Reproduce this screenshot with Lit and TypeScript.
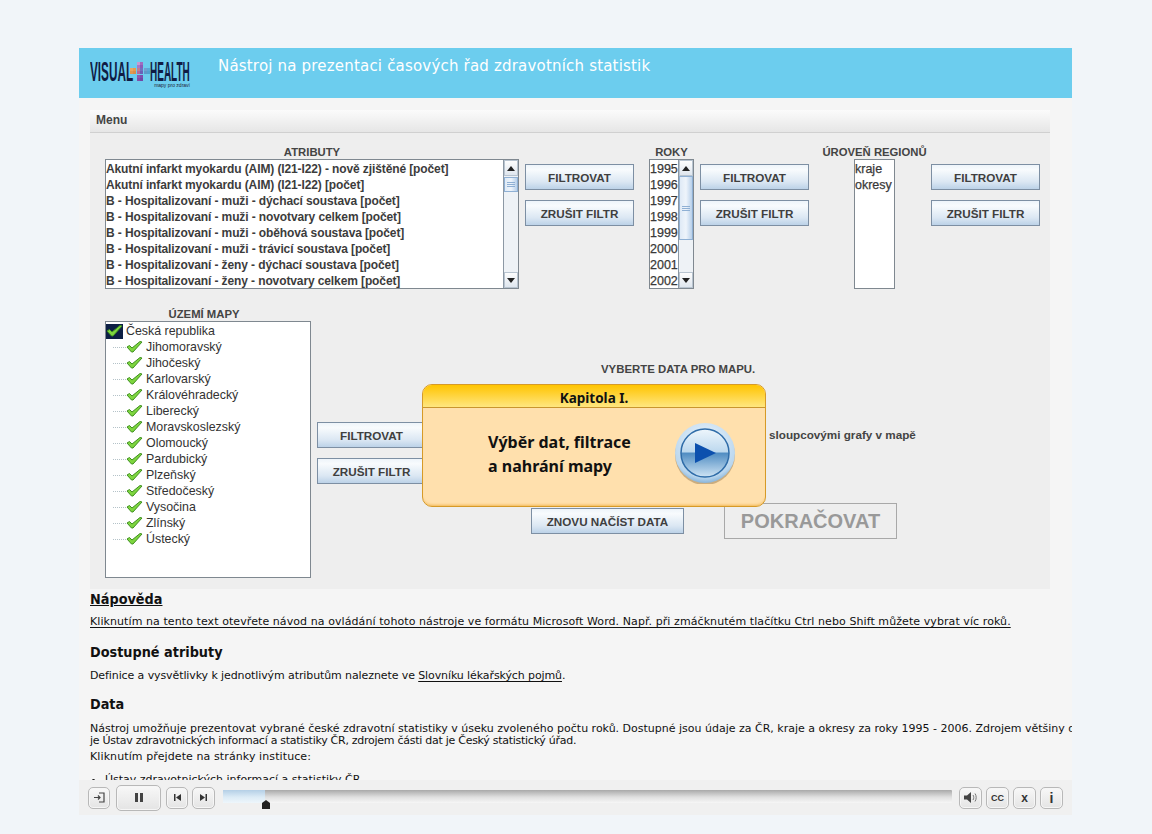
import { LitElement, html, css, svg } from "lit";
import { customElement } from "lit/decorators.js";

const ATTRS = [
  "Akutní infarkt myokardu (AIM) (I21-I22) - nově zjištěné [počet]",
  "Akutní infarkt myokardu (AIM) (I21-I22) [počet]",
  "B - Hospitalizovaní - muži - dýchací soustava [počet]",
  "B - Hospitalizovaní - muži - novotvary celkem [počet]",
  "B - Hospitalizovaní - muži - oběhová soustava [počet]",
  "B - Hospitalizovaní - muži - trávicí soustava [počet]",
  "B - Hospitalizovaní - ženy - dýchací soustava [počet]",
  "B - Hospitalizovaní - ženy - novotvary celkem [počet]",
];
const YEARS = ["1995", "1996", "1997", "1998", "1999", "2000", "2001", "2002"];
const REGIONS = ["Jihomoravský", "Jihočeský", "Karlovarský", "Královéhradecký", "Liberecký", "Moravskoslezský", "Olomoucký", "Pardubický", "Plzeňský", "Středočeský", "Vysočina", "Zlínský", "Ústecký"];

const check = svg`<path d="M1 7 L3.5 5.5 L6 8 L14 1.5 L16 2 L7 12 L5.5 12 Z" fill="#7ed63f" stroke="#3f8f20" stroke-width="1"/>`;

const plusCells: [number, number, string][] = [
  [7,0,"#c79ad0"],[10,0,"#a06cc0"],[7,3,"#a878c8"],[10,3,"#8a5cb8"],
  [0,6,"#e8a860"],[3,6,"#e89a50"],[7,6,"#c08090"],[10,6,"#7070c0"],[14,6,"#70a0d0"],[17,6,"#58a8d8"],
  [0,9,"#e09850"],[3,9,"#d89048"],[7,9,"#b06aa0"],[10,9,"#6a60b8"],[14,9,"#6098c8"],[17,9,"#50a0d0"],
  [7,13,"#9058b0"],[10,13,"#7a50b0"],[7,16,"#8050a8"],[10,16,"#7048a8"],
];

@customElement("app-root")
export class AppRoot extends LitElement {
  static styles = css`
    :host { display: block; width: 1152px; height: 834px; background: #f1f5f9; overflow: hidden; font-family: "Liberation Sans", Arial, sans-serif; }
    .wrap { width: 993px; margin-left: 79px; padding-top: 48px; }
    .top { height: 50px; background: #6ccdee; display: flex; align-items: flex-start; }
    .logo { width: 100px; height: 36px; margin: 9px 0 0 11px; display: flex; flex-direction: column; flex: none; }
    .logo-row { display: flex; align-items: center; height: 20px; margin-top: 5px; color: #101c44; font-weight: 700; font-size: 28px; line-height: 20px; }
    .lt { display: block; width: 40px; white-space: nowrap; transform-origin: 0 50%; flex: none; }
    .lt.v { transform: scaleX(.42); }
    .lt.h { transform: scaleX(.357); }
    .logo svg { flex: none; width: 20px; height: 20px; }
    .tag { font-size: 5px; color: #223; text-align: right; width: 100px; line-height: 6px; }
    .title { margin: 8px 0 0 28px; color: #fff; font-family: "DejaVu Sans", sans-serif; font-size: 15px; line-height: 20px; letter-spacing: .19px; }

    .scroll { height: 682px; overflow: hidden; background: #f5f5f5; padding: 12px 11px 0; box-sizing: border-box; white-space: nowrap; }
    .applet { position: relative; width: 960px; height: 479px; background: #eeeeee; color: #333; }
    .menu { height: 23px; box-sizing: border-box; background: linear-gradient(#fbfbfb, #e6e6e6); border-bottom: 1px solid #d0d0d0; font-size: 12px; font-weight: 700; line-height: 21px; padding-left: 6px; color: #444; }
    .row1 { display: flex; padding: 12px 0 0 15px; height: 167px; box-sizing: border-box; }
    .col { display: flex; flex-direction: column; align-items: center; }
    .lab { font-size: 11.3px; font-weight: 700; line-height: 15px; height: 14px; color: #444; white-space: nowrap; }
    .listbox { display: flex; height: 130px; box-sizing: border-box; border: 1px solid #7f8890; background: #fff; }
    .items { flex: 1; overflow: hidden; font-weight: 700; font-size: 12px; letter-spacing: -.11px; line-height: 16px; color: #3c3c3c; padding-top: 1px; }
    .items div { height: 16px; white-space: nowrap; }
    .yearitems { font-size: 12.5px; letter-spacing: 0; font-weight: 400; -webkit-text-stroke: .25px #333; overflow: visible; min-width: 0; }
    .sb { width: 14px; flex: none; border-left: 1px solid #8c98a4; background: #eef2f6; display: flex; flex-direction: column; }
    .arrow { height: 16px; flex: none; background: linear-gradient(#fdfdfd, #dfe6ee); border: 1px solid #b8c4d0; box-sizing: border-box; display: flex; align-items: center; justify-content: center; }
    .tri-up { width: 0; height: 0; border: 4px solid transparent; border-top: 0; border-bottom: 5px solid #222; }
    .tri-dn { width: 0; height: 0; border: 4px solid transparent; border-bottom: 0; border-top: 5px solid #222; }
    .track { flex: 1; }
    .thumb { box-sizing: border-box; background: linear-gradient(90deg, #dfeaf6, #eef4fb 50%, #b8d0ea); border: 1px solid #8fb0d4; display: flex; flex-direction: column; align-items: center; justify-content: center; gap: 1px; }
    .thumb i { display: block; width: 8px; height: 1px; background: #8fb0d4; }
    .thumb-a { height: 15px; margin-top: 1px; }
    .thumb-b { height: 64px; }
    .btns { display: flex; flex-direction: column; gap: 10px; padding-top: 19px; }
    .btn { width: 109px; height: 26px; box-sizing: border-box; border: 1px solid #7d8fa3; background: linear-gradient(#eef4fa, #f8fbfd 20%, #dbe7f3 70%, #bcd2e8); font: 700 11.7px/24px "Liberation Sans", Arial, sans-serif; color: #3f3f3f; text-align: center; padding: 1px 0 0; white-space: nowrap; display: block; }
    .c-attr { width: 414px; }
    .c-attr .listbox { width: 414px; }
    .g1 { margin-left: 6px; }
    .c-year { width: 45px; margin-left: 15px; }
    .c-year .listbox { width: 45px; }
    .g2 { margin-left: 6px; }
    .c-reg { width: 41px; margin-left: 45px; }
    .c-reg .listbox { width: 41px; }
    .c-reg .items { font-size: 12.5px; font-weight: 400; letter-spacing: 0; -webkit-text-stroke: .25px #333; }
    .g3 { margin-left: 36px; }

    .row2 { display: flex; padding: 7px 0 0 15px; }
    .c-tree { width: 206px; }
    .c-tree .lab { padding-right: 8px; }
    .tree { width: 206px; height: 257px; box-sizing: border-box; border: 1px solid #7f8890; background: #fff; font-size: 12.4px; color: #333; padding-top: 1px; }
    .node { display: flex; align-items: center; height: 16px; white-space: nowrap; }
    .node svg { width: 17px; height: 14px; flex: none; }
    .node .t { margin-left: 3px; }
    .root-ic { width: 17px; height: 15px; flex: none; background: #0d1f44; }
    .root-ic svg { display: block; }
    .dash { width: 13px; margin-left: 7px; border-top: 1px dotted #b4c2c8; flex: none; }
    .center { margin-left: 6px; width: 620px; position: relative; }
    .vyb { font-size: 11.4px; font-weight: 700; color: #444; line-height: 15px; padding: 55px 0 0 284px; }
    .mid { display: flex; margin-top: 45px; }
    .mid .btns { padding: 0; gap: 10px; }
    .mid-txt { margin: 5px 0 0 343px; font-size: 11.7px; font-weight: 700; color: #444; line-height: 15px; }
    .bot { display: flex; align-items: center; margin-top: 19px; padding-left: 214px; }
    .bot .btn { width: 153px; }
    .pok { margin-left: 40px; width: 173px; height: 36px; box-sizing: border-box; border: 1px solid #a8a8a8; color: #999; font-weight: 700; font-size: 20px; line-height: 34px; text-align: center; }

    .chapter { position: absolute; left: 332px; top: 274px; width: 344px; height: 123px; box-sizing: border-box; border: 1px solid #d69a28; border-radius: 10px; background: #ffe0ad; overflow: hidden; font-family: "Noto Sans", sans-serif; color: #111; box-shadow: inset 0 -3px 3px -2px #f2b650; }
    .ch-head { height: 23px; box-sizing: border-box; padding-top: 2px; background: linear-gradient(#ffc400, #ffe680); border-bottom: 1px solid #c9952e; font-size: 13.5px; font-weight: 700; line-height: 22px; text-align: center; }
    .ch-body { display: flex; padding: 22px 0 0 65px; }
    .ch-text { width: 187px; font-size: 16px; font-weight: 700; line-height: 24px; }
    .ch-text div { white-space: nowrap; }
    .play { width: 62px; height: 62px; flex: none; margin-top: -8px; margin-left: -1px; }

    .help { font-family: "DejaVu Sans", sans-serif; color: #111; padding-top: 1px; }
    h2 { margin: 0; font-size: 14.3px; font-stretch: condensed; font-weight: 700; line-height: 18px; }
    h2.u { text-decoration: underline; }
    p { margin: 0; font-size: 11px; line-height: 12px; }
    u { text-underline-offset: 2px; }
    .p1 { margin-top: 8px; letter-spacing: .08px; }
    .s2 { margin-top: 15px; }
    .p2 { margin-top: 9px; letter-spacing: -.1px; }
    .s3 { margin-top: 13px; }
    .p3 { margin-top: 10px; }
    .narrow { letter-spacing: -.27px; }
    .p4 { margin-top: 4px; letter-spacing: .1px; }
    ul { margin: 11px 0 0; padding: 0 0 0 15px; font-size: 11px; line-height: 12px; }

    .player { height: 35px; background: #f0f0f0; display: flex; align-items: center; padding: 0 9px; box-sizing: border-box; }
    .pb { width: 23px; height: 22px; box-sizing: border-box; border: 1px solid #b8b8b8; border-radius: 5px; background: linear-gradient(#f8f8f8, #e4e4e4); box-shadow: inset 0 0 0 1px #f6f6f6; display: flex; align-items: center; justify-content: center; flex: none; margin-right: 4px; font: 700 10px "Liberation Sans", sans-serif; color: #333; }
    .pb svg { display: block; }
    .pb.first { width: 22px; margin-right: 6px; }
    .pb.wide { width: 45px; height: 26px; margin-right: 5px; }
    .pb.prev { width: 22px; }
    .pb.next { margin-right: 0; }
    .tl { flex: 1; height: 26px; position: relative; margin: 0 7px 0 8px; }
    .bar { height: 13px; margin-top: 5px; background: linear-gradient(#a9a9a9, #e0e0e0 55%, #f6f6f6); border-radius: 1px; position: relative; }
    .bar b { display: block; width: 42px; height: 13px; background: linear-gradient(#b4cfe6, #dcebf6 55%, #eef6fb); }
    .knob { position: absolute; left: 39px; top: 15px; }
    .cc { font-size: 9px; }
    .x { font-size: 12px; }
    .i { font-size: 14px; }
    .rt { margin-right: 0; }
  `;

  private sb(thumbCls: string) {
    return html`<div class="sb"><div class="arrow"><span class="tri-up"></span></div><div class="thumb ${thumbCls}"><i></i><i></i><i></i></div><div class="track"></div><div class="arrow"><span class="tri-dn"></span></div></div>`;
  }
  private btns(cls: string) {
    return html`<div class="btns ${cls}"><button class="btn">FILTROVAT</button><button class="btn">ZRUŠIT FILTR</button></div>`;
  }

  render() {
    return html`<div class="wrap">
      <div class="top">
        <div class="logo">
          <div class="logo-row"><span class="lt v">VISUAL</span><svg viewBox="0 0 20 20">${plusCells.map(([x, y, c]) => svg`<rect x=${x} y=${y} width="3" height="3" fill=${c}/>`)}</svg><span class="lt h">HEALTH</span></div>
          <div class="tag">mapy pro zdraví</div>
        </div>
        <div class="title">Nástroj na prezentaci časových řad zdravotních statistik</div>
      </div>
      <div class="scroll">
        <div class="applet">
          <div class="menu">Menu</div>
          <div class="row1">
            <div class="col c-attr"><div class="lab">ATRIBUTY</div><div class="listbox"><div class="items">${ATTRS.map((a) => html`<div>${a}</div>`)}</div>${this.sb("thumb-a")}</div></div>
            ${this.btns("g1")}
            <div class="col c-year"><div class="lab">ROKY</div><div class="listbox"><div class="items yearitems">${YEARS.map((a) => html`<div>${a}</div>`)}</div>${this.sb("thumb-b")}</div></div>
            ${this.btns("g2")}
            <div class="col c-reg"><div class="lab">ÚROVEŇ REGIONŮ</div><div class="listbox"><div class="items"><div>kraje</div><div>okresy</div></div></div></div>
            ${this.btns("g3")}
          </div>
          <div class="row2">
            <div class="col c-tree"><div class="lab">ÚZEMÍ MAPY</div>
              <div class="tree">
                <div class="node"><span class="root-ic"><svg width="17" height="15" viewBox="0 0 17 14">${check}</svg></span><span class="t">Česká republika</span></div>
                ${REGIONS.map((r) => html`<div class="node"><span class="dash"></span><svg viewBox="0 0 17 14">${check}</svg><span class="t">${r}</span></div>`)}
              </div>
            </div>
            <div class="center">
              <div class="vyb">VYBERTE DATA PRO MAPU.</div>
              <div class="mid">${this.btns("")}<div class="mid-txt">sloupcovými grafy v mapě</div></div>
              <div class="bot"><button class="btn">ZNOVU NAČÍST DATA</button><div class="pok">POKRAČOVAT</div></div>
            </div>
          </div>
          <div class="chapter">
            <div class="ch-head">Kapitola I.</div>
            <div class="ch-body">
              <div class="ch-text"><div>Výběr dat, filtrace</div><div>a nahrání mapy</div></div>
              <svg class="play" viewBox="0 0 62 62">
                <defs>
                  <radialGradient id="rim" cx=".5" cy=".35" r=".7"><stop offset="0" stop-color="#f4f9fd"/><stop offset=".8" stop-color="#b9d6ee"/><stop offset="1" stop-color="#6fa3cf"/></radialGradient>
                  <linearGradient id="gl" x1="0" y1="0" x2="0" y2="1"><stop offset="0" stop-color="#eef6fc"/><stop offset=".48" stop-color="#bcd8ee"/><stop offset=".5" stop-color="#4f8cc2"/><stop offset="1" stop-color="#cfe4f4"/></linearGradient>
                </defs>
                <circle cx="31" cy="33" r="30" fill="#a98a60" opacity=".6"/>
                <circle cx="31" cy="31" r="30" fill="url(#rim)"/>
                <circle cx="31" cy="31" r="24" fill="url(#gl)" stroke="#2f6ca8" stroke-width="1.5"/>
                <path d="M21 21 L42 31 L21 41 Z" fill="#0c50ae"/>
              </svg>
            </div>
          </div>
        </div>
        <div class="help">
          <h2 class="u">Nápověda</h2>
          <p class="p1"><u>Kliknutím na tento text otevřete návod na ovládání tohoto nástroje ve formátu Microsoft Word. Např. při zmáčknutém tlačítku Ctrl nebo Shift můžete vybrat víc roků.</u></p>
          <h2 class="s2">Dostupné atributy</h2>
          <p class="p2">Definice a vysvětlivky k jednotlivým atributům naleznete ve <u>Slovníku lékařských pojmů</u>.</p>
          <h2 class="s3">Data</h2>
          <p class="p3">Nástroj umožňuje prezentovat vybrané české zdravotní statistiky v úseku zvoleného počtu roků. Dostupné jsou údaje za ČR, kraje a okresy za roky 1995 - 2006. Zdrojem většiny dat<br><span class="narrow">je Ústav zdravotnických informací a statistiky ČR, zdrojem části dat je Český statistický úřad.</span></p>
          <p class="p4">Kliknutím přejdete na stránky instituce:</p>
          <ul><li>Ústav zdravotnických informací a statistiky ČR</li></ul>
        </div>
      </div>
      <div class="player">
        <div class="pb first"><svg width="13" height="13" viewBox="0 0 13 13"><path d="M6 2h5v9H6M1 6.5h6M5 4.5l2 2-2 2" fill="none" stroke="#444" stroke-width="1.2"/></svg></div>
        <div class="pb wide"><svg width="10" height="11" viewBox="0 0 10 11"><rect x="1" y="1" width="3" height="9" fill="#444"/><rect x="6" y="1" width="3" height="9" fill="#444"/></svg></div>
        <div class="pb prev"><svg width="9" height="9" viewBox="0 0 9 9"><rect x="1" y="1" width="1.5" height="7" fill="#333"/><path d="M8 1v7L3 4.5z" fill="#333"/></svg></div>
        <div class="pb next"><svg width="9" height="9" viewBox="0 0 9 9"><path d="M1 1v7l5-3.5z" fill="#333"/><rect x="6.5" y="1" width="1.5" height="7" fill="#333"/></svg></div>
        <div class="tl"><div class="bar"><b></b></div><svg class="knob" width="8" height="9" viewBox="0 0 8 9"><path d="M4 0L8 3V9H0V3Z" fill="#222"/></svg></div>
        <div class="pb"><svg width="13" height="11" viewBox="0 0 13 11"><path d="M0 3.5h3L7 0v11L3 7.5H0z" fill="#444"/><path d="M9 3c1 1.5 1 3.5 0 5M11 1.5c1.6 2.4 1.6 5.6 0 8" fill="none" stroke="#777"/></svg></div>
        <div class="pb cc">CC</div>
        <div class="pb x">x</div>
        <div class="pb rt i">i</div>
      </div>
    </div>`;
  }
}
